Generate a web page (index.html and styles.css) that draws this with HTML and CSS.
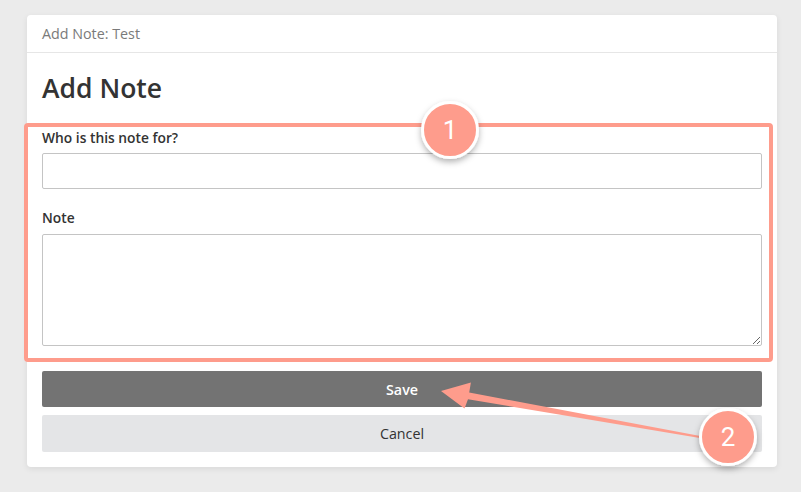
FILE: index.html
```html
<!DOCTYPE html>
<html>
<head>
<meta charset="utf-8">
<link rel="stylesheet" href="styles.css">
</head>
<body>
<div class="card">
  <div class="card-header">Add Note: Test</div>
  <div class="card-body">
    <h1 class="title">Add Note</h1>
    <label class="field-label">Who is this note for?</label>
    <input class="text-input" type="text">
    <label class="field-label note-label">Note</label>
    <textarea class="text-area"></textarea>
    <button class="btn btn-save">Save</button>
    <button class="btn btn-cancel">Cancel</button>
  </div>
</div>
<svg class="annotations" width="801" height="492" viewBox="0 0 801 492">
  <defs>
    <filter id="sh" x="-50%" y="-50%" width="200%" height="200%">
      <feDropShadow dx="0" dy="3" stdDeviation="3" flood-color="#000" flood-opacity="0.3"/>
    </filter>
  </defs>
  <rect x="26" y="125" width="745" height="235" rx="2" fill="none" stroke="#fe9c8c" stroke-width="4"/>
  <polygon points="441,391 470.9,382.5 469.2,392.5 700.2,436 699.8,438 468,399.3 464.5,408.5" fill="#fe9c8c"/>
  <g filter="url(#sh)">
    <circle cx="450" cy="130" r="27.5" fill="#fe9c8c" stroke="#fff" stroke-width="3"/>
    <circle cx="728" cy="437" r="27.5" fill="#fe9c8c" stroke="#fff" stroke-width="3"/>
  </g>
  <text class="badge-num" x="450" y="139" text-anchor="middle">1</text>
  <text class="badge-num" x="728" y="446" text-anchor="middle">2</text>
</svg>
</body>
</html>
```

FILE: styles.css
```css
* { box-sizing: border-box; }
html, body { margin: 0; padding: 0; }
body {
  background: #ebebeb;
  width: 801px;
  height: 492px;
  overflow: hidden;
  position: relative;
  padding: 15px 24px 0 27px;
  font-family: "Segoe UI", "Open Sans", "Noto Sans", sans-serif;
  color: #333;
}
.card {
  width: 750px;
  background: #fff;
  border-radius: 4px;
  box-shadow: 0 2px 6px rgba(0,0,0,0.08);
}
.card-header {
  height: 38px;
  line-height: 37px;
  padding: 0 15px;
  border-bottom: 1px solid #e6e6e6;
  font-size: 14.3px;
  color: #7a7a7a;
}
.card-body {
  padding: 0 15px 15px;
  display: flex;
  flex-direction: column;
}
.title {
  margin: 20px 0 24px;
  font-size: 26.5px;
  line-height: 31px;
  font-weight: 600;
  color: #333;
}
.field-label {
  display: block;
  font-size: 13.8px;
  font-weight: 600;
  line-height: 20px;
  color: #333;
}
.text-input {
  margin-top: 5px;
  height: 36px;
  border: 1px solid #c4c4c4;
  border-radius: 2px;
  width: 100%;
}
.note-label { margin-top: 19px; }
.text-area {
  margin-top: 6px;
  height: 112px;
  border: 1px solid #c4c4c4;
  border-radius: 2px;
  width: 100%;
  resize: both;
}
.btn {
  display: block;
  width: 100%;
  height: 36px;
  border: 0;
  border-radius: 2px;
  font-family: "Segoe UI", "Open Sans", "Noto Sans", sans-serif;
  font-size: 14.3px;
}
.btn-save {
  margin-top: 25px;
  background: #737373;
  color: #fff;
  font-weight: 600;
}
.btn-cancel {
  margin-top: 8px;
  height: 37px;
  background: #e4e5e7;
  color: #333;
}
.annotations {
  position: absolute;
  left: 0;
  top: 0;
  pointer-events: none;
}
.badge-num {
  font-family: Roboto, "Liberation Sans", sans-serif;
  font-size: 26px;
  fill: #fff;
}
```
